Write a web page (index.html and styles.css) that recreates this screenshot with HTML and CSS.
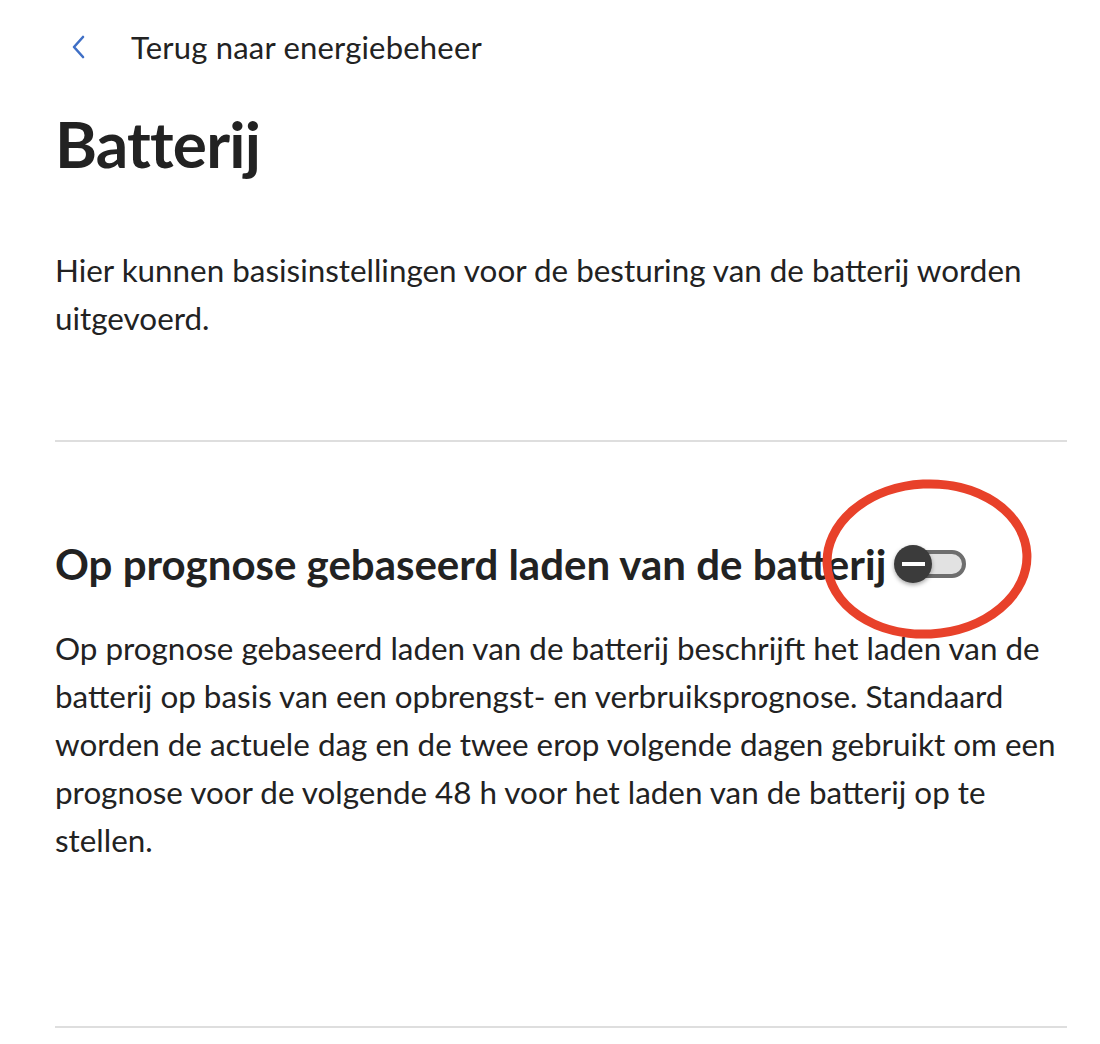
FILE: index.html
```html
<!DOCTYPE html>
<html lang="nl">
<head>
<meta charset="utf-8">
<title>Batterij</title>
<link rel="stylesheet" href="styles.css">
</head>
<body>
<main class="page">
  <a class="back" href="#">
    <svg class="back-icon" width="16" height="24" viewBox="0 0 16 24" aria-hidden="true">
      <path d="M12 2 L3 12 L12 22" fill="none" stroke="#3f6fc6" stroke-width="2.6" stroke-linecap="round" stroke-linejoin="round"/>
    </svg>
    <span class="back-text">Terug naar energiebeheer</span>
  </a>
  <h1 class="title">Batterij</h1>
  <p class="intro">Hier kunnen basisinstellingen voor de besturing van de batterij worden uitgevoerd.</p>
  <hr class="divider">
  <section class="setting">
    <div class="setting-head">
      <h2 class="setting-title">Op prognose gebaseerd laden van de batterij</h2>
      <span class="toggle">
        <span class="toggle-track"></span>
        <span class="toggle-knob"><span class="toggle-minus"></span></span>
      </span>
    </div>
    <p class="setting-text">Op prognose gebaseerd laden van de batterij beschrijft het laden van de batterij op basis van een opbrengst- en verbruiksprognose. Standaard worden de actuele dag en de twee erop volgende dagen gebruikt om een prognose voor de volgende 48 h voor het laden van de batterij op te stellen.</p>
  </section>
  <hr class="divider divider-bottom">
  <svg class="annotation" width="230" height="180" viewBox="0 0 230 180" aria-hidden="true">
    <ellipse cx="115" cy="90" rx="100" ry="75" fill="none" stroke="#e8412a" stroke-width="9" transform="rotate(-3 115 90)"/>
  </svg>
</main>
</body>
</html>
```
FILE: styles.css
```css
html, body {
  margin: 0;
  padding: 0;
  background: #ffffff;
}
body {
  font-family: "Lato", "Liberation Sans", sans-serif;
  color: #222222;
}
.page {
  position: relative;
  width: 1012px;
  margin-left: 55px;
  padding-top: 22px;
  height: 1044px;
  box-sizing: border-box;
  overflow: hidden;
}
.back {
  display: flex;
  align-items: center;
  gap: 44px;
  text-decoration: none;
  color: #222222;
  height: 50px;
  padding-left: 16px;
}
.back-icon {
  display: block;
}
.back-text {
  font-size: 31px;
  letter-spacing: 0.2px;
}
.title {
  margin: 36px 0 0 0;
  font-size: 64px;
  font-weight: 700;
  line-height: 72px;
  letter-spacing: -0.8px;
}
.intro {
  margin: 66px 0 0 0;
  font-size: 31.4px;
  line-height: 48px;
}
.divider {
  margin: 98px 0 0 0;
  border: 0;
  height: 2px;
  background: #dedede;
}
.setting {
  padding-top: 98px;
}
.setting-head {
  display: flex;
  align-items: center;
  gap: 8px;
}
.setting-title {
  margin: 0;
  font-size: 42px;
  font-weight: 700;
  line-height: 48px;
}
.toggle {
  position: relative;
  display: block;
  width: 72px;
  height: 40px;
}
.toggle-track {
  position: absolute;
  left: 6px;
  top: 6px;
  width: 66px;
  height: 28px;
  box-sizing: border-box;
  border: 4px solid #6e6e6e;
  border-radius: 14px;
  background: #e2e2e2;
}
.toggle-knob {
  position: absolute;
  left: 0;
  top: 1px;
  width: 38px;
  height: 38px;
  border-radius: 50%;
  background: #3b3b3b;
  box-shadow: 0 2px 4px rgba(0,0,0,0.35);
  display: flex;
  align-items: center;
  justify-content: center;
}
.toggle-minus {
  display: block;
  width: 23px;
  height: 4px;
  background: #ffffff;
}
.setting-text {
  margin: 36px 0 0 0;
  font-size: 31.4px;
  line-height: 48px;
}
.divider-bottom {
  margin-top: 162px;
}
.annotation {
  position: absolute;
  left: 757px;
  top: 469px;
}
```
